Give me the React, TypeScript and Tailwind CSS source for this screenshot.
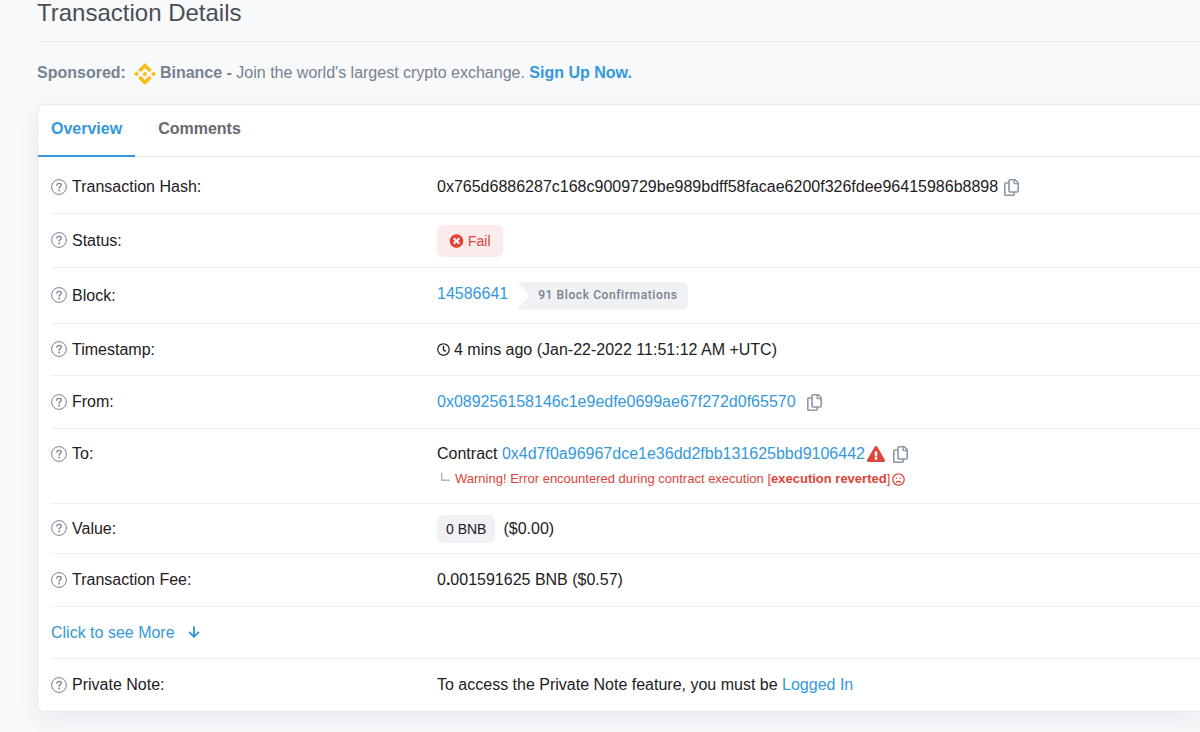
import type { ReactNode } from "react";
import { FaExclamationTriangle, FaRegClock, FaRegFrown, FaTimesCircle } from "react-icons/fa";

function HelpIcon() {
	return <svg className="w-4 h-4 mr-[5px] mb-px shrink-0 text-[#77838f]" viewBox="0 0 16 16" fill="none" stroke="currentColor" aria-hidden="true">
		<circle cx="8" cy="8" r="7.4" strokeWidth="1" />
		<path d="M5.8 6.2c0-1.2 1-1.9 2.3-1.9s2.2.8 2.2 1.8c0 1.5-2.2 1.5-2.2 3.1" strokeWidth="1.3" strokeLinecap="round" />
		<circle cx="8.1" cy="11.5" r="0.9" fill="currentColor" stroke="none" />
	</svg>
}

function BinanceLogo() {
	return <svg className="w-[22px] h-[22px] ml-2 mr-1 mt-0.5" viewBox="0 0 126.61 126.61" fill="#f9bc13" aria-hidden="true">
		<path d="M38.73 53.2l24.59-24.58 24.6 24.6 14.3-14.31L63.32 0 24.43 38.9z" />
		<path d="M0 63.31L14.3 49l14.31 14.31L14.3 77.61z" />
		<path d="M38.73 73.41L63.32 98l24.6-24.6 14.31 14.29-38.91 38.92-38.91-38.88z" />
		<path d="M98 63.31L112.3 49l14.31 14.3-14.31 14.32z" />
		<path d="M77.83 63.3L63.32 48.78 48.79 63.3l14.53 14.53z" />
	</svg>
}

function CopyIcon() {
	return <svg className="w-[15px] h-[17px]" viewBox="0 0 15 17" fill="none" stroke="currentColor" strokeWidth="1.6" strokeLinejoin="round" aria-hidden="true">
		<path d="M6 .8h5.2l3 3V12a1 1 0 0 1-1 1H6a1 1 0 0 1-1-1V1.8a1 1 0 0 1 1-1z" />
		<path d="M10.2 1v3.6H14" strokeWidth="1.4" />
		<path d="M5 4H1.8a1 1 0 0 0-1 1v10.2a1 1 0 0 0 1 1h7.4a1 1 0 0 0 1-1V13" />
	</svg>
}

function ArrowDownIcon() {
	return <svg className="w-3 h-3 mb-0.5" viewBox="0 0 12 12" fill="none" stroke="currentColor" strokeWidth="1.9" aria-hidden="true">
		<path d="M6 .5v10.2M1 5.9l5 4.9 5-4.9" />
	</svg>
}

function CornerIcon() {
	return <svg className="w-[9px] h-2 ml-1 mr-[5px] mb-1" viewBox="0 0 9 8" fill="none" stroke="#aab5c4" strokeWidth="1.4" aria-hidden="true">
		<path d="M.7 0v7.2H9" />
	</svg>
}

function CopyButton(props: { label: string }) {
	return <button type="button" aria-label={props.label} className="text-[#8c98a4]">
		<CopyIcon />
	</button>
}

function Row(props: { label: string, height: string, children: ReactNode }) {
	const { label, height, children } = props;
	return <div className={`flex border-b border-[#eef0f6] last:border-b-0 ${height}`}>
		<dt className="flex items-center h-[50px] w-[386px] shrink-0"><HelpIcon />{label}</dt>
		<dd className="flex-1 whitespace-nowrap">{children}</dd>
	</div>
}

export default function App() {
	return <main className="min-h-screen overflow-hidden bg-[#f8f9fb] pl-[37px] pb-5 font-['Liberation_Sans',Arial,sans-serif] text-base leading-6 text-[#1e2022]">
		<h1 className="h-[42px] border-b border-[#e7eaf3] text-2xl leading-[26px] text-[#4a4f55]">Transaction Details</h1>
		<p className="flex items-center h-[62px] whitespace-nowrap text-[#77838f]">
			<b>Sponsored:</b>
			<BinanceLogo />
			<span><b>Binance -</b> Join the world's largest crypto exchange. <a href="#signup" className="font-bold text-[#3498db]">Sign Up Now.</a></span>
		</p>
		<section className="rounded-l-lg border border-r-0 border-[#e7eaf3] bg-white shadow-[0_8px_24px_rgba(140,152,164,0.14)]">
			<nav className="flex h-[52px] border-b border-[#e7eaf3] font-bold leading-[48px]">
				<a href="#overview" className="h-[52px] px-[13px] border-b-2 border-[#3498db] text-[#3498db]">Overview</a>
				<a href="#comments" className="px-[23px] text-[#67696d]">Comments</a>
			</nav>
			<div className="pl-[13px]">
				<dl className="border-b border-[#eef0f6]">
					<Row label="Transaction Hash:" height="h-[57px] items-center pt-1">
						<div className="flex items-center gap-[6px]">
							0x765d6886287c168c9009729be989bdff58facae6200f326fdee96415986b8898
							<CopyButton label="Copy transaction hash" />
						</div>
					</Row>
					<Row label="Status:" height="h-[54px] items-center">
						<span className="inline-flex items-center gap-1 h-8 px-3 rounded-md bg-[#fcebeb] text-sm text-[#de4437]">
							<FaTimesCircle className="w-[15px] h-[14px]" />Fail
						</span>
					</Row>
					<Row label="Block:" height="h-[56px] items-center">
						<div className="flex items-center gap-[9px]">
							<a href="#block" className="pb-1 text-[#3498db]">14586641</a>
							<span className="h-7 pl-[21px] pr-[11px] rounded-r-md bg-[#f0f1f4] font-[Roboto,sans-serif] font-medium text-xs leading-[26px] tracking-wider text-[#77838f] [clip-path:polygon(0_0,100%_0,100%_100%,0_100%,12px_50%)]">91 Block Confirmations</span>
						</div>
					</Row>
					<Row label="Timestamp:" height="h-[52px] items-center">
						<div className="flex items-center gap-1">
							<FaRegClock className="w-[13px] h-[13px]" />
							4 mins ago (Jan-22-2022 11:51:12 AM +UTC)
						</div>
					</Row>
					<Row label="From:" height="h-[53px] items-center">
						<div className="flex items-center gap-[11px]">
							<a href="#from" className="text-[#3498db]">0x089256158146c1e9edfe0699ae67f272d0f65570</a>
							<CopyButton label="Copy sender address" />
						</div>
					</Row>
					<Row label="To:" height="h-[75px] items-start">
						<div className="flex items-center pt-[13px]">
							<span className="mr-0.5">Contract <a href="#to" className="text-[#3498db]">0x4d7f0a96967dce1e36dd2fbb131625bbd9106442</a></span>
							<FaExclamationTriangle className="w-[18px] h-4 mr-2 text-[#de4437]" />
							<CopyButton label="Copy contract address" />
						</div>
						<p className="flex items-center text-[13px] leading-[26px] text-[#de4437]">
							<CornerIcon />
							<span className="mr-0.5">Warning! Error encountered during contract execution [<b>execution reverted</b>]</span>
							<FaRegFrown className="w-[13px] h-[13px]" />
						</p>
					</Row>
					<Row label="Value:" height="h-[50px] items-center">
						<div className="flex items-center gap-2">
							<span className="h-7 px-[9px] rounded-md bg-[#f0f1f4] text-sm leading-7">0 BNB</span>
							($0.00)
						</div>
					</Row>
					<Row label="Transaction Fee:" height="h-[52px] items-center">0<b>.</b>001591625 BNB ($0.57)</Row>
				</dl>
				<div className="flex items-center h-[52px] border-b border-[#eef0f6]">
					<button type="button" className="flex items-center gap-[13px] text-[#3498db]">Click to see More <ArrowDownIcon /></button>
				</div>
				<dl>
					<Row label="Private Note:" height="h-[52px] items-center">
						To access the Private Note feature, you must be <a href="#login" className="text-[#3498db]">Logged In</a>
					</Row>
				</dl>
			</div>
		</section>
	</main>
}
